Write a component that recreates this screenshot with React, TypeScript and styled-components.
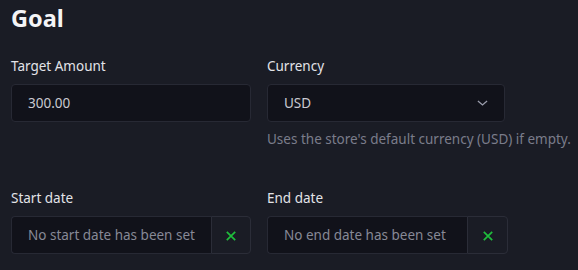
import React from 'react';
import styled, { createGlobalStyle } from 'styled-components';

const GlobalStyle = createGlobalStyle`
  html, body {
    margin: 0;
    padding: 0;
    background: #1a1c25;
  }
  * {
    box-sizing: border-box;
  }
`;

const App = () => {
  return (
    <>
      <GlobalStyle />
      <Wrapper>
        <Title>Goal</Title>
        <FieldGrid>
          <Field>
            <Label>Target Amount</Label>
            <TextInput defaultValue="300.00" />
          </Field>
          <Field>
            <Label>Currency</Label>
            <Select>
              <SelectValue>USD</SelectValue>
              <Chevron viewBox="0 0 12 6" aria-hidden>
                <path d="M1 0.8 L6 5.2 L11 0.8" />
              </Chevron>
            </Select>
            <Helper>Uses the store's default currency (USD) if empty.</Helper>
          </Field>
          <Field>
            <Label>Start date</Label>
            <DateGroup>
              <DateBox>No start date has been set</DateBox>
              <ClearButton type="button" aria-label="Clear start date">
                <ClearIcon />
              </ClearButton>
            </DateGroup>
          </Field>
          <Field>
            <Label>End date</Label>
            <DateGroup>
              <DateBox>No end date has been set</DateBox>
              <ClearButton type="button" aria-label="Clear end date">
                <ClearIcon />
              </ClearButton>
            </DateGroup>
          </Field>
        </FieldGrid>
      </Wrapper>
    </>
  );
};

const ClearIcon = () => (
  <XMark viewBox="0 0 10 10" aria-hidden>
    <path d="M0.8 0.8 L9.2 9.2 M9.2 0.8 L0.8 9.2" />
  </XMark>
);

export default App;

export const Wrapper = styled.div`
  width: 578px;
  height: 270px;
  padding: 2px 11px 0;
  font-family: 'Noto Sans', 'Open Sans', sans-serif;
  color: #e4e5ea;
  overflow: hidden;
`;

export const Title = styled.h2`
  margin: 0;
  font-size: 23.5px;
  line-height: 32px;
  font-weight: 700;
  color: #f4f4f6;
`;

export const FieldGrid = styled.div`
  display: grid;
  grid-template-columns: 240px 241px;
  column-gap: 16px;
  row-gap: 39px;
  margin-top: 22px;
  align-items: start;
`;

export const Field = styled.div`
  display: flex;
  flex-direction: column;
`;

export const Label = styled.label`
  font-size: 13.5px;
  line-height: 20px;
  color: #e2e3e8;
  margin-bottom: 8px;
`;

export const TextInput = styled.input`
  height: 38px;
  width: 100%;
  padding: 0 16px;
  border: 1px solid #272934;
  border-radius: 4px;
  background: #11121a;
  color: #c9cad1;
  font-family: inherit;
  font-size: 13.5px;
  outline: none;
`;

export const Select = styled.div`
  display: flex;
  align-items: center;
  justify-content: space-between;
  height: 38px;
  width: 238px;
  padding: 0 16px;
  border: 1px solid #272934;
  border-radius: 4px;
  background: #11121a;
`;

export const SelectValue = styled.span`
  font-size: 13.5px;
  color: #c9cad1;
`;

export const Chevron = styled.svg`
  width: 11px;
  height: 6px;
  fill: none;
  stroke: #9a9cab;
  stroke-width: 1.4;
`;

export const Helper = styled.p`
  margin: 7px 0 0;
  font-size: 13.5px;
  line-height: 20px;
  color: #7b7d8b;
  white-space: nowrap;
`;

export const DateGroup = styled.div`
  display: flex;
  height: 38px;
`;

export const DateBox = styled.div`
  flex: 1;
  display: flex;
  align-items: center;
  padding: 0 16px;
  border: 1px solid #272934;
  border-right: none;
  border-radius: 4px 0 0 4px;
  background: #11121a;
  font-size: 13.5px;
  color: #878996;
  white-space: nowrap;
`;

export const ClearButton = styled.button`
  width: 41px;
  display: flex;
  align-items: center;
  justify-content: center;
  padding: 0;
  border: 1px solid #2b2d38;
  border-radius: 0 4px 4px 0;
  background: #1a1c25;
  cursor: pointer;
`;

export const XMark = styled.svg`
  width: 10px;
  height: 10px;
  fill: none;
  stroke: #1fbe3c;
  stroke-width: 1.7;
  margin-top: 1px;
`;
